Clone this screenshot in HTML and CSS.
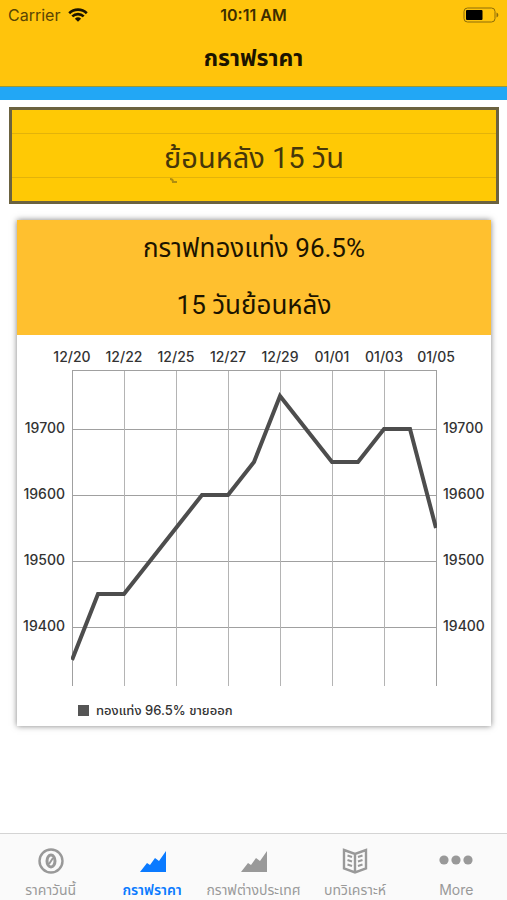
FILE: index.html
```
<!DOCTYPE html>
<html lang="th">
<head>
    <meta charset="UTF-8">
    <meta name="viewport" content="width=device-width, initial-scale=1.0">
    <title>กราฟราคา</title>
    <link rel="stylesheet" href="styles.css">
</head>
<body>
    <header class="header">
        <div class="status-bar">
            <div class="carrier">
                <span>Carrier</span>
                <svg class="wifi" viewBox="0 0 20 14" aria-hidden="true">
                    <path d="M1.2 5.2a12.6 12.6 0 0 1 17.6 0" />
                    <path d="M4.3 8.4a8.2 8.2 0 0 1 11.4 0" />
                    <path class="dot" d="M6.9 10.7a4.6 4.6 0 0 1 6.2 0L10 13.8z" />
                </svg>
            </div>
            <span class="time">10:11 AM</span>
            <svg class="battery" viewBox="0 0 36 16" aria-hidden="true">
                <rect class="case" x="1" y="1" width="31" height="14" rx="3.5" />
                <rect x="3" y="3" width="16.5" height="10" rx="1" />
                <path class="cap" d="M33.5 5.5c2.4.8 2.4 4.2 0 5z" />
            </svg>
        </div>
        <h1>กราฟราคา</h1>
    </header>

    <main>
        <!-- เลือกช่วงเวลา -->
        <div class="picker">
            <select class="period" aria-label="ช่วงเวลา">
                <option>ย้อนหลัง 15 วัน</option>
                <option>ย้อนหลัง 30 วัน</option>
            </select>
            <svg class="next-hint" viewBox="0 0 178 6" aria-hidden="true">
                <path d="M5 1q3 0 3 3h4" />
            </svg>
        </div>

        <!-- กราฟ -->
        <section class="card">
            <h2>
                <span>กราฟทองแท่ง 96.5%</span>
                <span>15 วันย้อนหลัง</span>
            </h2>
            <svg class="chart" viewBox="0 0 474 356" role="img" aria-label="กราฟทองแท่ง 96.5%">
                <defs>
                    <clipPath id="plot"><rect x="54" y="35" width="366" height="316" /></clipPath>
                </defs>
                <path class="grid" d="M55 94H419M55 160H419M55 226H419M55 292H419" />
                <path class="grid-v" d="M107 35V351M159 35V351M211 35V351M263 35V351M315 35V351M367 35V351" />
                <path class="axis" d="M55 351V35H419V351" />
                <g class="labels-x">
                    <text x="55" y="27">12/20</text>
                    <text x="107" y="27">12/22</text>
                    <text x="159" y="27">12/25</text>
                    <text x="211" y="27">12/27</text>
                    <text x="263" y="27">12/29</text>
                    <text x="315" y="27">01/01</text>
                    <text x="367" y="27">01/03</text>
                    <text x="419" y="27">01/05</text>
                </g>
                <g class="labels-left">
                    <text x="48" y="98">19700</text>
                    <text x="48" y="164">19600</text>
                    <text x="48" y="230">19500</text>
                    <text x="48" y="296">19400</text>
                </g>
                <g class="labels-right">
                    <text x="426" y="98">19700</text>
                    <text x="426" y="164">19600</text>
                    <text x="426" y="230">19500</text>
                    <text x="426" y="296">19400</text>
                </g>
                <polyline class="line" clip-path="url(#plot)" points="55,325 81,259 107,259 133,226 159,193 185,160 211,160 237,127 263,61 289,94 315,127 341,127 367,94 393,94 419,193" />
            </svg>
            <div class="legend">
                <span class="swatch"></span>
                <span>ทองแท่ง 96.5% ขายออก</span>
            </div>
        </section>
    </main>

    <nav class="tabs">
        <a href="#today">
            <svg viewBox="0 0 28 28" aria-hidden="true">
                <circle class="stroke" cx="14" cy="14" r="11.5" />
                <ellipse class="stroke zero" cx="14" cy="14" rx="4" ry="6" />
                <path class="rule" d="M12 17l4-6" />
            </svg>
            <span>ราคาวันนี้</span>
        </a>
        <a class="active" href="#chart">
            <svg viewBox="0 0 28 28" aria-hidden="true">
                <path d="M2 25l7-9 3 2 5-7 4 3 7-10v21z" />
            </svg>
            <span>กราฟราคา</span>
        </a>
        <a href="#world">
            <svg viewBox="0 0 28 28" aria-hidden="true">
                <path d="M2 25l7-9 3 2 5-7 4 3 7-10v21z" />
            </svg>
            <span>กราฟต่างประเทศ</span>
        </a>
        <a href="#analysis">
            <svg viewBox="0 0 28 28" aria-hidden="true">
                <path class="stroke" d="M3 3l11 4 11-4v18.5l-11 4-11-4zM14 7v18" />
                <path class="rule" d="M6.5 8.5l4.5 1.5M6.5 13l4.5 1.5M6.5 17.5l4.5 1.5M21.5 8.5l-4.5 1.5M21.5 13l-4.5 1.5M21.5 17.5l-4.5 1.5" />
            </svg>
            <span>บทวิเคราะห์</span>
        </a>
        <a href="#more">
            <svg class="dots" viewBox="0 0 34 28" aria-hidden="true">
                <circle cx="5" cy="13" r="4.6" />
                <circle cx="17" cy="13" r="4.6" />
                <circle cx="29" cy="13" r="4.6" />
            </svg>
            <span>More</span>
        </a>
    </nav>
</body>
</html>
```
FILE: styles.css
```
* {
    box-sizing: border-box;
}
body {
    margin: 0;
    min-height: 100vh;
    display: flex;
    flex-direction: column;
    background-color: #fff;
    color: #1c1400;
    font-family: Inter, "Noto Sans Thai", "Noto Sans", sans-serif;
}
.header {
    background-color: #ffc40c;
    border-bottom: 13px solid #22a7f5;
    box-shadow: inset 0 -1px #97983c;
}
.status-bar {
    display: grid;
    grid-template-columns: 1fr auto 1fr;
    align-items: center;
    height: 30px;
    padding: 0 8px;
    font-size: 16px;
}
.carrier {
    display: flex;
    align-items: center;
    gap: 8px;
    color: #5a4503;
}
.time {
    font-weight: 600;
    color: #3d2d00;
}
.wifi {
    width: 20px;
    height: 14px;
    fill: none;
    stroke: #1c1400;
    stroke-width: 2.6;
}
.wifi .dot {
    fill: #1c1400;
    stroke: none;
}
.battery {
    width: 36px;
    height: 16px;
    justify-self: end;
}
.battery .case {
    fill: none;
    stroke: #8d6d0a;
}
.battery .cap {
    fill: #8d6d0a;
}
h1 {
    margin: 0;
    height: 57px;
    line-height: 56px;
    font-size: 23px;
    font-weight: 700;
    text-align: center;
}
main {
    flex: 1;
    padding: 7px 8px 16px 9px;
}
.picker {
    height: 97px;
    padding-top: 23px;
    border: 3px solid #6b623f;
    background-color: #ffc905;
}
.period {
    display: block;
    width: 100%;
    height: 45px;
    padding: 4px 0 0;
    border: solid #e3b30a;
    border-width: 1px 0;
    border-radius: 0;
    background: none;
    appearance: none;
    color: #46370a;
    font-family: Roboto, "Noto Sans Thai", sans-serif;
    font-size: 29px;
    text-align: center;
    text-align-last: center;
}
.next-hint {
    display: block;
    width: 178px;
    height: 6px;
    margin: 0 auto;
    fill: none;
    stroke: #b08d10;
    stroke-width: 2;
}
.card {
    margin: 16px 8px 0;
    background-color: #fff;
    box-shadow: 0 0 6px rgba(0, 0, 0, 0.5);
}
h2 {
    margin: 0;
    padding-bottom: 1px;
    background-color: #ffc02f;
    font-family: Roboto, "Noto Sans Thai", sans-serif;
    font-size: 26px;
    font-weight: 400;
    text-align: center;
}
h2 span {
    display: block;
    height: 57px;
    line-height: 57px;
}
.chart {
    display: block;
    width: 100%;
    font-size: 14px;
    font-weight: 500;
    fill: #333;
}
.grid, .grid-v, .axis {
    fill: none;
    stroke: #a0a0a0;
    stroke-width: 1;
    shape-rendering: crispEdges;
}
.grid-v {
    stroke: #b4b4b4;
}
.labels-x {
    text-anchor: middle;
}
.labels-left {
    text-anchor: end;
}
.line {
    fill: none;
    stroke: #4d4d4d;
    stroke-width: 4;
}
.legend {
    display: flex;
    align-items: center;
    gap: 7px;
    height: 35px;
    padding: 4px 0 0 61px;
    color: #333;
    font-size: 13px;
    font-weight: 500;
}
.swatch {
    width: 11px;
    height: 11px;
    background-color: #555;
}
.tabs {
    display: grid;
    grid-template-columns: repeat(5, 1fr);
    height: 67px;
    border-top: 1px solid #d4d4d4;
    background-color: #fafafa;
}
.tabs a {
    display: flex;
    flex-direction: column;
    align-items: center;
    padding-top: 13px;
    color: #999;
    fill: #999;
    font-size: 14px;
    line-height: 30px;
    text-decoration: none;
    white-space: nowrap;
}
.tabs .active {
    color: #0a7aff;
    fill: #0a7aff;
    font-weight: 600;
}
.tabs svg {
    width: 28px;
    height: 28px;
}
.tabs .dots {
    width: 34px;
}
.stroke, .rule {
    fill: none;
    stroke: #999;
    stroke-width: 2.4;
}
.zero {
    stroke-width: 3;
}
.rule {
    stroke-width: 2;
}
```
